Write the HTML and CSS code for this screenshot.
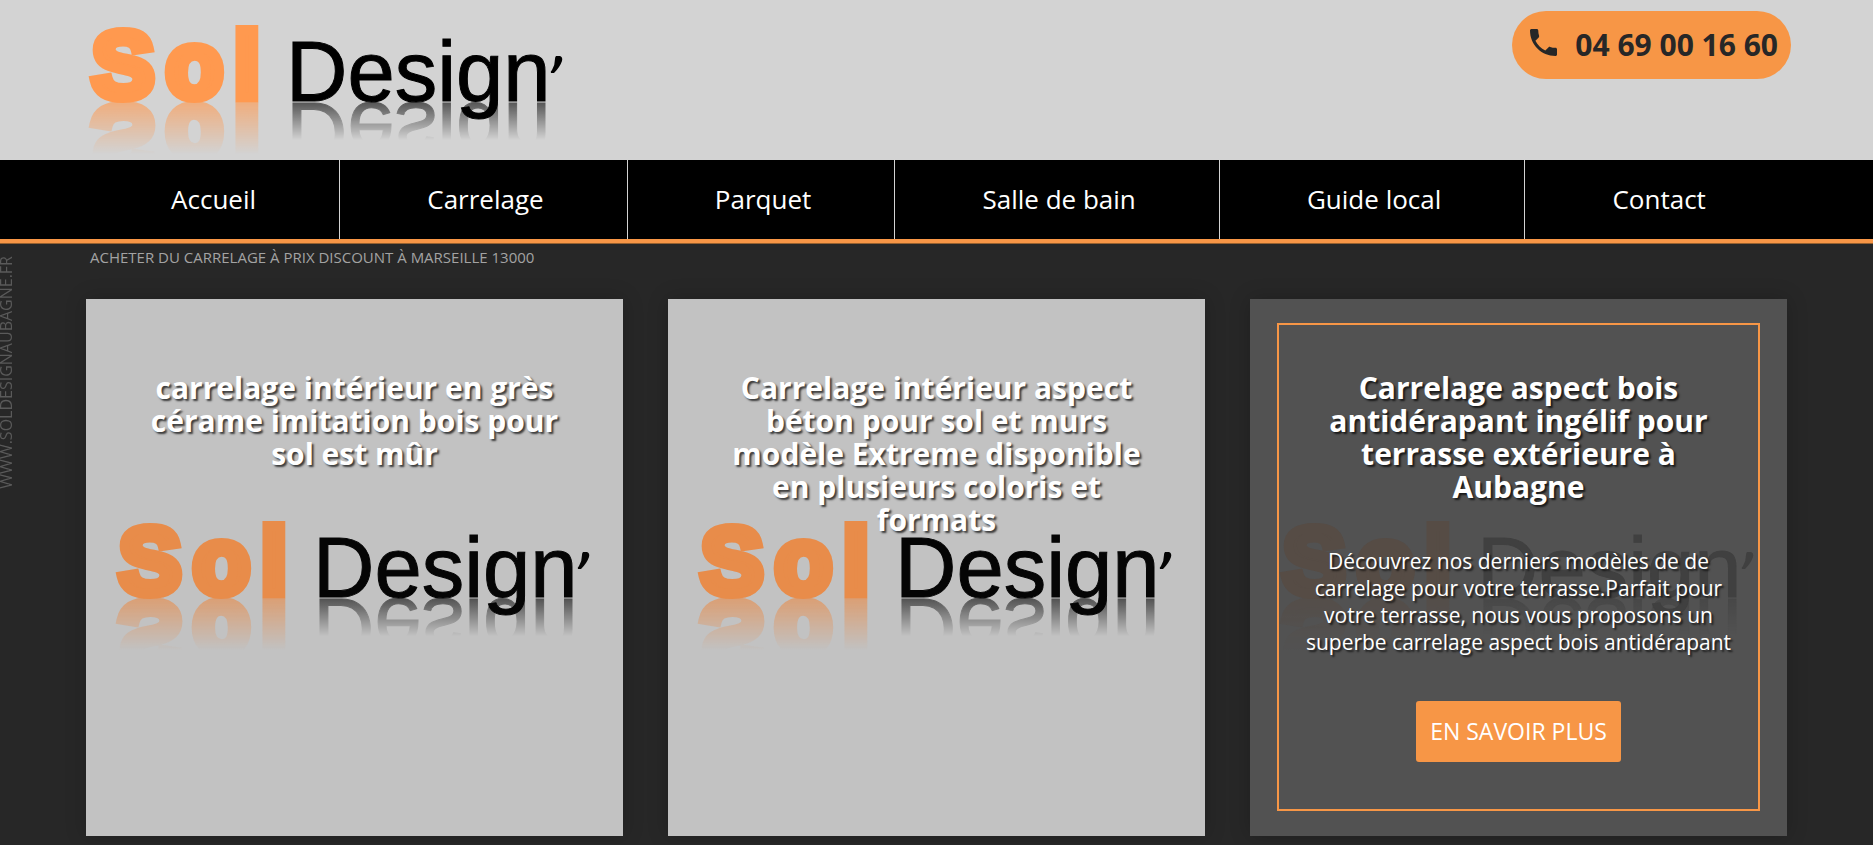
FILE: index.html
```html
<!DOCTYPE html>
<html lang="fr">
<head>
  <meta charset="UTF-8">
  <meta name="viewport" content="width=device-width, initial-scale=1">
  <title>Sol Design' - Carrelage Aubagne</title>
  <link rel="stylesheet" href="styles.css">
</head>
<body>

  <!-- logo, used in the header and in each card -->
  <svg class="defs" width="0" height="0" aria-hidden="true">
    <defs>
      <linearGradient id="fadeSol" gradientUnits="userSpaceOnUse" x1="0" y1="82" x2="0" y2="134">
        <stop offset="0" stop-color="#fff" stop-opacity="0.65"/>
        <stop offset="1" stop-color="#fff" stop-opacity="0"/>
      </linearGradient>
      <linearGradient id="fadeDesign" gradientUnits="userSpaceOnUse" x1="0" y1="82" x2="0" y2="120">
        <stop offset="0" stop-color="#fff" stop-opacity="0.6"/>
        <stop offset="1" stop-color="#fff" stop-opacity="0"/>
      </linearGradient>
      <mask id="maskSol" maskUnits="userSpaceOnUse" x="0" y="82" width="190" height="54">
        <rect x="0" y="82" width="190" height="54" fill="url(#fadeSol)"/>
      </mask>
      <mask id="maskDesign" maskUnits="userSpaceOnUse" x="190" y="82" width="300" height="54">
        <rect x="190" y="82" width="300" height="54" fill="url(#fadeDesign)"/>
      </mask>
      <symbol id="logo" viewBox="0 0 480 140">
        <g mask="url(#maskSol)" aria-hidden="true">
          <text class="logo-sol" x="4 78 146" y="77" transform="translate(0 164) scale(1 -1)">Sol</text>
        </g>
        <g mask="url(#maskDesign)" aria-hidden="true">
          <text class="logo-design" x="198" y="81" transform="translate(0 164) scale(1 -1)">Design</text>
        </g>
        <text class="logo-sol" x="4 78 146" y="77">Sol</text>
        <text class="logo-design" x="198" y="81">Design</text>
        <path class="logo-mark" d="M468 36h4q3 1 2 5q-2 6-8 12h-3q-1-1 1-3q3-5 3-11q0-2 1-3z"/>
      </symbol>
    </defs>
  </svg>

  <header class="header">
    <a class="brand" href="#" aria-label="Sol Design'">
      <svg class="logo"><use href="#logo"/></svg>
    </a>
    <a class="phone" href="tel:0469001660">
      <svg class="phone-icon" viewBox="3 3 18 18"><path d="M6.62 10.79c1.44 2.83 3.76 5.14 6.59 6.59l2.2-2.2c.27-.27.67-.36 1.02-.24 1.12.37 2.33.57 3.57.57.55 0 1 .45 1 1V20c0 .55-.45 1-1 1-9.39 0-17-7.61-17-17 0-.55.45-1 1-1h3.5c.55 0 1 .45 1 1 0 1.25.2 2.45.57 3.57.11.35.03.74-.25 1.02l-2.2 2.2z"/></svg>
      <span>04 69 00 16 60</span>
    </a>
  </header>

  <nav class="nav">
    <a href="#">Accueil</a>
    <a href="#">Carrelage</a>
    <a href="#">Parquet</a>
    <a href="#">Salle de bain</a>
    <a href="#">Guide local</a>
    <a href="#">Contact</a>
  </nav>

  <div class="side-url">WWW.SOLDESIGNAUBAGNE.FR</div>

  <main class="content">
    <h1 class="page-title">Acheter du carrelage à prix discount à Marseille 13000</h1>

    <div class="cards">
      <article class="card">
        <svg class="card-logo"><use href="#logo"/></svg>
        <div class="card-body">
          <h2>carrelage intérieur en grès cérame imitation bois pour sol est mûr</h2>
        </div>
      </article>

      <article class="card">
        <svg class="card-logo"><use href="#logo"/></svg>
        <div class="card-body">
          <h2>Carrelage intérieur aspect béton pour sol et murs modèle Extreme disponible en plusieurs coloris et formats</h2>
        </div>
      </article>

      <article class="card active">
        <svg class="card-logo"><use href="#logo"/></svg>
        <div class="card-body">
          <h2>Carrelage aspect bois antidérapant ingélif pour terrasse extérieure à Aubagne</h2>
          <p>Découvrez nos derniers modèles de de carrelage pour votre terrasse.Parfait pour votre terrasse, nous vous proposons un superbe carrelage aspect bois antidérapant</p>
          <a class="btn" href="#">EN SAVOIR PLUS</a>
        </div>
      </article>
    </div>
  </main>

</body>
</html>
```
FILE: styles.css
```css
* {
  box-sizing: border-box;
}

body {
  --sol: #ff994f;
  --design: #000;
  margin: 0;
  background: #272727;
  color: white;
  font-family: "Open Sans", sans-serif;
}

a {
  color: inherit;
  text-decoration: none;
}

.defs {
  position: absolute;
}

/* logo */
.logo,
.card-logo {
  display: block;
  width: 480px;
  height: 140px;
}

.logo-sol {
  font: bold 93px "Liberation Sans", Arial, sans-serif;
  fill: var(--sol);
  stroke: var(--sol);
  stroke-width: 10px;
}

.logo-design {
  font: 85px "Liberation Sans", Arial, sans-serif;
  fill: var(--design);
  stroke: var(--design);
  stroke-width: 1px;
}

.logo-mark {
  fill: var(--design);
}

/* header */
.header {
  display: flex;
  justify-content: space-between;
  align-items: flex-start;
  height: 160px;
  padding: 0 82px 0 88px;
  background: #d3d3d3;
}

.brand {
  margin-top: 20px;
}

.phone {
  display: flex;
  align-items: center;
  gap: 18px;
  height: 68px;
  margin-top: 11px;
  padding: 0 13px 2px 18px;
  border-radius: 34px;
  background: #f79646;
  color: #272727;
  font-size: 30px;
  font-weight: bold;
}

.phone-icon {
  width: 27px;
  height: 27px;
  margin-bottom: 4px;
  fill: #272727;
}

/* menu */
.nav {
  display: flex;
  padding: 0 84px;
  background: black;
  border-bottom: 4px solid #f79646;
  box-shadow: 0 1px #95602f;
}

.nav a {
  flex: 1 1 auto;
  height: 79px;
  padding-left: 4px;
  line-height: 79px;
  text-align: center;
  font-size: 26px;
  border-right: 1px solid #d3d3d3;
}

.nav a:last-child {
  border-right: none;
}

/* page */
.side-url {
  position: absolute;
  left: 0;
  top: 256px;
  writing-mode: vertical-rl;
  transform: rotate(180deg);
  font-size: 16px;
  line-height: 12px;
  color: #5a5a5a;
}

.content {
  padding: 0 86px 8px;
}

.page-title {
  margin: 0;
  padding: 3px 4px 30px;
  color: #a3a3a3;
  font-size: 15px;
  font-weight: normal;
  line-height: 23px;
  text-transform: uppercase;
}

.cards {
  display: grid;
  grid-template-columns: repeat(3, 1fr);
  gap: 45px;
}

.card {
  display: grid;
  aspect-ratio: 1;
  overflow: hidden;
  background: #c2c2c2;
  box-shadow: 0 0 20px rgba(0, 0, 0, 0.2);
  --sol: #e88c4a;
  --design: #050505;
}

.card-logo,
.card-body {
  grid-area: 1 / 1;
}

.card-logo {
  align-self: center;
  justify-self: center;
  margin-top: 36px;
}

.card-body {
  display: flex;
  flex-direction: column;
  align-items: center;
  z-index: 1;
  margin: 24px 27px 25px;
  padding: 46px 24px 0;
  border: 2px solid transparent;
  text-align: center;
  text-shadow: 2px 2px 2px rgba(0, 0, 0, 0.7);
}

.card h2 {
  margin: 0;
  padding: 0 6px;
  font-size: 30px;
  line-height: 33px;
}

.card p {
  margin: 45px 0;
  font-size: 21px;
  line-height: 27px;
}

.card.active {
  background: #525252;
  --sol: #564c45;
  --design: #404040;
}

.card.active .card-body {
  border-color: #f79646;
}

.btn {
  padding: 0 14px;
  border-radius: 3px;
  background: #f79646;
  font-size: 23px;
  line-height: 61px;
  text-shadow: none;
}
```
